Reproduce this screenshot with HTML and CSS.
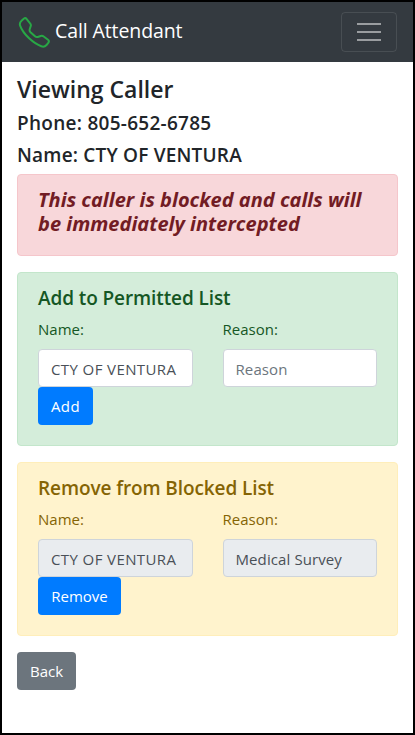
FILE: index.html
```html
<!DOCTYPE html>
<html lang="en">
<head>
<meta charset="utf-8">
<meta name="viewport" content="width=device-width, initial-scale=1">
<title>Call Attendant</title>
<link rel="stylesheet" href="styles.css">
</head>
<body>
<nav class="navbar">
  <a class="brand">
    <svg class="brand-icon" viewBox="0 0 32 32" width="32" height="32" aria-hidden="true"><path d="M3.5 3.8L6 1.5Q7.3.6 8.5 1.8L12.1 6.3Q13.3 7.7 12.7 9.2L11.7 12.2Q11.2 14 12.5 15.3L17 19.3Q18.2 20.4 19.8 20L22.7 19Q24.4 18.5 25.7 19.5L30 22.8Q31.5 24 30.4 25.6L28.5 28Q26.4 30.4 23.3 29.3C16 26.7 5.2 17.5 2.1 8.7Q1.2 5.8 3.5 3.8Z"/></svg>
    <span class="brand-name">Call Attendant</span>
  </a>
  <button class="toggler" aria-label="Toggle navigation">
    <svg viewBox="0 0 30 30" width="30" height="30"><path d="M3 7h24M3 15h24M3 23h24"/></svg>
  </button>
</nav>
<main class="container">
  <h4 class="title">Viewing Caller</h4>
  <h5 class="heading phone">Phone: 805-652-6785</h5>
  <h5 class="heading name">Name: CTY OF VENTURA</h5>
  <section class="alert danger">
    <h5 class="heading notice">This caller is blocked and calls will be immediately intercepted</h5>
  </section>
  <section class="alert success">
    <h5 class="heading">Add to Permitted List</h5>
    <div class="row">
      <div class="col"><label for="pn">Name:</label><input id="pn" class="caps" value="CTY OF VENTURA"><button class="btn primary add">Add</button></div>
      <div class="col"><label for="pr">Reason:</label><input id="pr" placeholder="Reason"></div>
    </div>
  </section>
  <section class="alert warning">
    <h5 class="heading">Remove from Blocked List</h5>
    <div class="row">
      <div class="col"><label for="bn">Name:</label><input id="bn" class="caps" value="CTY OF VENTURA" readonly><button class="btn primary remove">Remove</button></div>
      <div class="col"><label for="br">Reason:</label><input id="br" value="Medical Survey" readonly></div>
    </div>
  </section>
  <button class="btn secondary back">Back</button>
</main>
</body>
</html>
```
FILE: styles.css
```css
* { box-sizing: border-box; }
html { height: 100%; }
body {
  margin: 0;
  height: 735px;
  overflow: hidden;
  border: 2px solid #000;
  background: #fff;
  color: #212529;
  font: 400 15px/24px "Open Sans", "Noto Sans", sans-serif;
}
.navbar {
  display: flex;
  align-items: center;
  justify-content: space-between;
  height: 60px;
  padding: 0 16px;
  background: #343a40;
}
.brand { display: flex; align-items: center; color: #fff; }
.brand-icon { display: block; margin: 2px 5px 0 0; fill: none; stroke: #28a745; stroke-width: 2; }
.brand-name { margin-bottom: 2px; font-size: 19.5px; line-height: 30px; letter-spacing: -.1px; }
.toggler {
  width: 56px;
  height: 40px;
  padding: 4px 12px;
  border: 1px solid rgba(255,255,255,.1);
  border-radius: 4px;
  background: transparent;
}
.toggler svg { display: block; stroke: rgba(255,255,255,.5); stroke-width: 2; fill: none; }
.container { padding: 13.2px 15px 0; }
.title { margin: 0 0 7px; font-size: 23px; font-weight: 600; line-height: 28.8px; letter-spacing: 0; }
.heading { margin: 0 0 8px; font-size: 19px; font-weight: 600; line-height: 24px; letter-spacing: -.1px; }
.phone { letter-spacing: .27px; }
.name { margin-bottom: 7px; letter-spacing: .2px; }
.alert { margin-bottom: 16px; padding: 13px 20px 11px; border: 1px solid; border-radius: 4px; }
.danger { height: 82px; color: #721c24; background: #f8d7da; border-color: #f5c6cb; }
.success { height: 174px; color: #155724; background: #d4edda; border-color: #c3e6cb; }
.warning { height: 174px; color: #856404; background: #fff3cd; border-color: #ffeeba; }
.success .heading, .warning .heading { margin-bottom: 7px; }
.notice { font-size: 20px; font-style: italic; font-weight: 700; letter-spacing: 0; }
.row { display: grid; grid-template-columns: 1fr 1fr; column-gap: 30px; }
.col { min-width: 0; }
label { display: block; width: max-content; margin-bottom: 8px; }
input {
  display: block;
  width: 100%;
  height: 38px;
  padding: 8px 12px 6px;
  border: 1px solid #ced4da;
  border-radius: 4px;
  background: #fff;
  color: #495057;
  font: inherit;
  letter-spacing: .1px;
}
.caps { letter-spacing: .4px; }
input::placeholder { color: #6c757d; opacity: 1; }
input[readonly] { background: #e9ecef; }
.btn {
  display: block;
  height: 38px;
  padding: 0;
  border: 0;
  border-radius: 4px;
  color: #fff;
  font: inherit;
}
.primary { background: #007bff; }
.secondary { background: #6c757d; }
.add { width: 55px; letter-spacing: .4px; }
.remove { width: 83px; }
.back { width: 59px; }
```
